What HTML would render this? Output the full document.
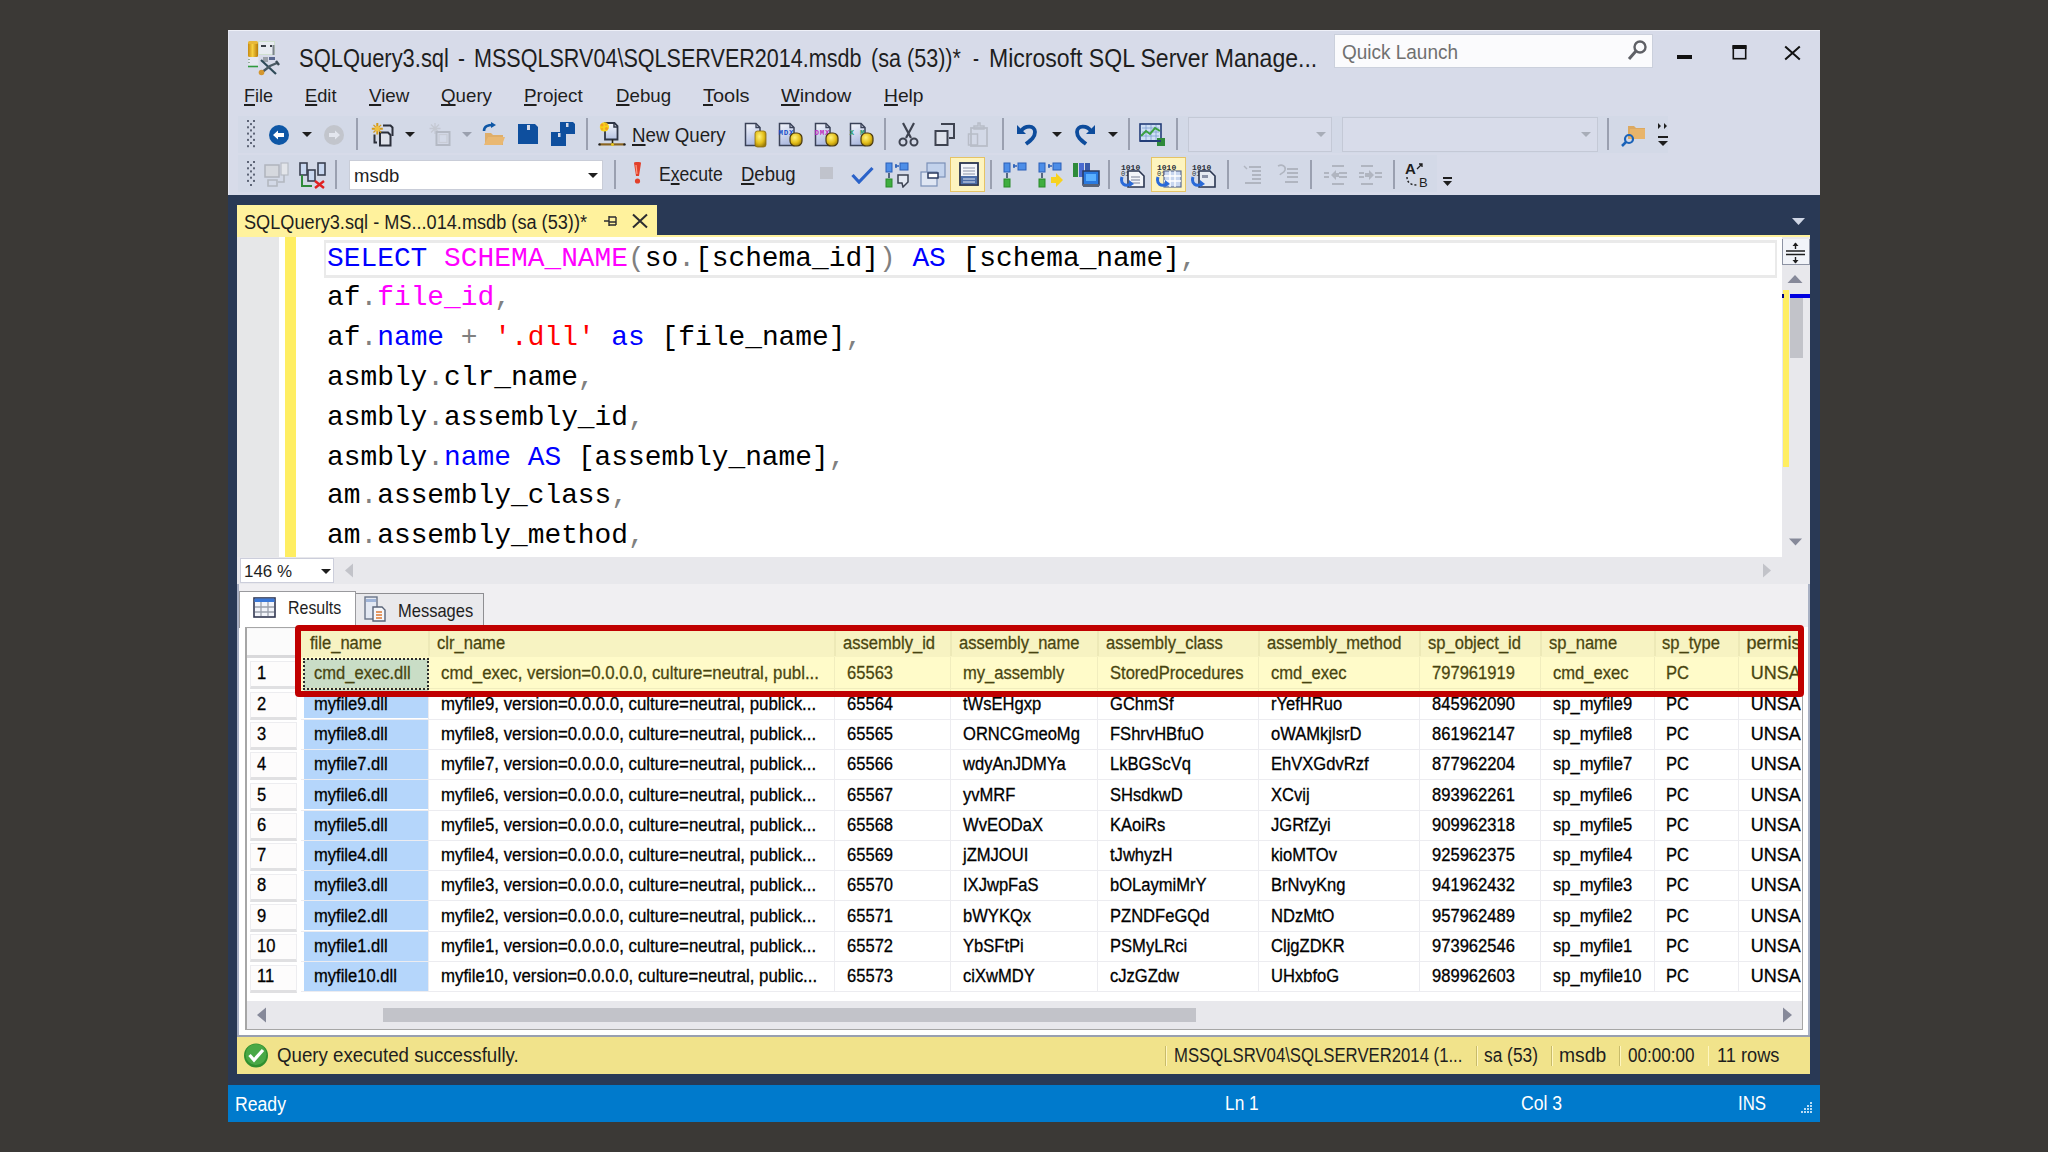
<!DOCTYPE html>
<html><head><meta charset="utf-8">
<style>
*{margin:0;padding:0;box-sizing:border-box}
html,body{width:2048px;height:1152px;overflow:hidden;background:#3b3936;font-family:"Liberation Sans",sans-serif}
.a{position:absolute;display:block}
.t{position:absolute;white-space:nowrap;line-height:1;transform-origin:0 0}
u{text-decoration:underline;text-decoration-thickness:2px;text-underline-offset:2px;text-decoration-skip-ink:none}
</style></head><body>

<div class="a" style="left:228px;top:30px;width:1592px;height:165px;background:#d7dbe9;border-top:1px solid #eef0f8;border-left:1px solid #e4e6f0"></div>
<div class="a" style="left:238px;top:116px;width:1430px;height:37px;background:#d3d9e7;"></div>
<div class="a" style="left:238px;top:155px;width:1199px;height:37px;background:#d3d9e7;"></div>
<svg class="a" style="left:246px;top:38px;" width="36" height="38" viewBox="0 0 36 38">
<defs><linearGradient id="cyl" x1="0" x2="1"><stop offset="0" stop-color="#c88a10"/><stop offset=".45" stop-color="#f6d040"/><stop offset="1" stop-color="#b87a08"/></linearGradient></defs>
<rect x="2" y="4" width="10" height="15" rx="1.5" fill="url(#cyl)"/>
<rect x="2" y="3" width="10" height="3" rx="1.5" fill="#e8b838"/>
<rect x="12.5" y="3.5" width="16" height="13" fill="#e8ecf2" stroke="#cfe0cf" stroke-width="1"/>
<rect x="15" y="7" width="5" height="2" fill="#3a4048"/>
<rect x="24" y="7" width="2" height="2" fill="#3a4048"/>
<rect x="26.5" y="7" width="2" height="10" fill="#7d848c"/>
<rect x="2.5" y="19" width="10" height="9" fill="#e6e8f2"/>
<path d="M3 21 V27" stroke="#4a7a4a" stroke-width="1" stroke-dasharray="1 2"/>
<line x1="2" y1="28.5" x2="12" y2="28.5" stroke="#2f9a3f" stroke-width="1.6"/>
<rect x="17" y="19" width="5" height="5" fill="#9aa0a8"/>
<rect x="23" y="19" width="6" height="3" fill="#5a6890"/>
<path d="M15 22 L30 36" stroke="#2e4a58" stroke-width="2.2"/>
<path d="M31 25 L24 28 L15 35" stroke="#4a5a64" stroke-width="2.4" fill="none"/>
<path d="M30 23 L33 27" stroke="#3a4a54" stroke-width="2.4"/>
<circle cx="15.5" cy="34.5" r="2.8" fill="#d4962e"/>
</svg>
<div class="t" style="left:299.00px;top:44.56px;font-size:26.5px;color:#1e1e1e;font-family:'Liberation Sans',sans-serif;transform:scaleX(0.8276);">SQLQuery3.sql</div>
<div class="t" style="left:458.00px;top:44.56px;font-size:26.5px;color:#1e1e1e;font-family:'Liberation Sans',sans-serif;transform:scaleX(0.7885);">-</div>
<div class="t" style="left:474.20px;top:44.56px;font-size:26.5px;color:#1e1e1e;font-family:'Liberation Sans',sans-serif;transform:scaleX(0.8137);">MSSQLSRV04\SQLSERVER2014.msdb</div>
<div class="t" style="left:870.60px;top:44.56px;font-size:26.5px;color:#1e1e1e;font-family:'Liberation Sans',sans-serif;transform:scaleX(0.8144);">(sa (53))*</div>
<div class="t" style="left:973.00px;top:44.56px;font-size:26.5px;color:#1e1e1e;font-family:'Liberation Sans',sans-serif;transform:scaleX(0.6759);">-</div>
<div class="t" style="left:989.20px;top:44.56px;font-size:26.5px;color:#1e1e1e;font-family:'Liberation Sans',sans-serif;transform:scaleX(0.8694);">Microsoft SQL Server Manage...</div>
<div class="a" style="left:1334px;top:34px;width:319px;height:34px;background:#fbfbfd;border:1px solid #cbd0dc"></div>
<div class="t" style="left:1342.00px;top:42.24px;font-size:20.5px;color:#707070;font-family:'Liberation Sans',sans-serif;transform:scaleX(0.9254);">Quick Launch</div>
<svg class="a" style="left:1624px;top:38px;" width="26" height="26" viewBox="0 0 26 26">
<circle cx="16" cy="9" r="5.5" fill="none" stroke="#5f6066" stroke-width="2.4"/>
<line x1="12" y1="13" x2="5" y2="21" stroke="#5f6066" stroke-width="3"/>
</svg>
<div class="a" style="left:1677px;top:54.5px;width:15px;height:4.5px;background:#111111;"></div>
<svg class="a" style="left:1731px;top:44px;" width="17" height="17" viewBox="0 0 17 17"><rect x="2.3" y="2.3" width="12.4" height="12.4" fill="none" stroke="#111" stroke-width="1.6"/><rect x="1.5" y="1" width="14" height="4" fill="#111"/></svg>
<svg class="a" style="left:1783px;top:44px;" width="20" height="18" viewBox="0 0 20 18"><path d="M2.2 2.5 L16.8 15.5 M16.8 2.5 L2.2 15.5" stroke="#111" stroke-width="2"/></svg>
<div class="t" style="left:244.00px;top:85.91px;font-size:19px;color:#1e1e1e;font-family:'Liberation Sans',sans-serif;transform:scaleX(0.9480);"><u>F</u>ile</div>
<div class="t" style="left:305.00px;top:85.91px;font-size:19px;color:#1e1e1e;font-family:'Liberation Sans',sans-serif;transform:scaleX(0.9611);"><u>E</u>dit</div>
<div class="t" style="left:368.70px;top:85.91px;font-size:19px;color:#1e1e1e;font-family:'Liberation Sans',sans-serif;transform:scaleX(0.9865);"><u>V</u>iew</div>
<div class="t" style="left:440.80px;top:85.91px;font-size:19px;color:#1e1e1e;font-family:'Liberation Sans',sans-serif;transform:scaleX(0.9850);"><u>Q</u>uery</div>
<div class="t" style="left:524.30px;top:85.91px;font-size:19px;color:#1e1e1e;font-family:'Liberation Sans',sans-serif;transform:scaleX(0.9934);"><u>P</u>roject</div>
<div class="t" style="left:615.70px;top:85.91px;font-size:19px;color:#1e1e1e;font-family:'Liberation Sans',sans-serif;transform:scaleX(0.9829);"><u>D</u>ebug</div>
<div class="t" style="left:703.20px;top:85.91px;font-size:19px;color:#1e1e1e;font-family:'Liberation Sans',sans-serif;transform:scaleX(1.0504);"><u>T</u>ools</div>
<div class="t" style="left:781.40px;top:85.91px;font-size:19px;color:#1e1e1e;font-family:'Liberation Sans',sans-serif;transform:scaleX(1.0408);"><u>W</u>indow</div>
<div class="t" style="left:884.30px;top:85.91px;font-size:19px;color:#1e1e1e;font-family:'Liberation Sans',sans-serif;transform:scaleX(1.0117);"><u>H</u>elp</div>
<svg class="a" style="left:247px;top:120px;" width="9" height="28" viewBox="0 0 9 28"><rect x="0" y="0.0" width="2" height="2" fill="#5d6476"/><rect x="6" y="0.0" width="2" height="2" fill="#5d6476"/><rect x="3" y="3.1" width="2" height="2" fill="#5d6476"/><rect x="0" y="6.3" width="2" height="2" fill="#5d6476"/><rect x="6" y="6.3" width="2" height="2" fill="#5d6476"/><rect x="3" y="9.4" width="2" height="2" fill="#5d6476"/><rect x="0" y="12.6" width="2" height="2" fill="#5d6476"/><rect x="6" y="12.6" width="2" height="2" fill="#5d6476"/><rect x="3" y="15.7" width="2" height="2" fill="#5d6476"/><rect x="0" y="18.9" width="2" height="2" fill="#5d6476"/><rect x="6" y="18.9" width="2" height="2" fill="#5d6476"/><rect x="3" y="22.0" width="2" height="2" fill="#5d6476"/><rect x="0" y="25.2" width="2" height="2" fill="#5d6476"/><rect x="6" y="25.2" width="2" height="2" fill="#5d6476"/></svg>
<svg class="a" style="left:247px;top:161px;" width="9" height="28" viewBox="0 0 9 28"><rect x="0" y="0.0" width="2" height="2" fill="#5d6476"/><rect x="6" y="0.0" width="2" height="2" fill="#5d6476"/><rect x="3" y="3.1" width="2" height="2" fill="#5d6476"/><rect x="0" y="6.3" width="2" height="2" fill="#5d6476"/><rect x="6" y="6.3" width="2" height="2" fill="#5d6476"/><rect x="3" y="9.4" width="2" height="2" fill="#5d6476"/><rect x="0" y="12.6" width="2" height="2" fill="#5d6476"/><rect x="6" y="12.6" width="2" height="2" fill="#5d6476"/><rect x="3" y="15.7" width="2" height="2" fill="#5d6476"/><rect x="0" y="18.9" width="2" height="2" fill="#5d6476"/><rect x="6" y="18.9" width="2" height="2" fill="#5d6476"/></svg>
<svg class="a" style="left:250px;top:184px;" width="4" height="3" viewBox="0 0 4 3"><rect x="0" y="0" width="2" height="2" fill="#5d6476"/></svg>
<svg class="a" style="left:268px;top:124px;" width="22" height="22" viewBox="0 0 22 22"><circle cx="11" cy="11" r="10" fill="#0e57a6"/><path d="M5 11 L10 6.5 V9 H16 V13 H10 V15.5 Z" fill="#ffffff"/></svg>
<svg class="a" style="left:301.5px;top:132px;" width="10" height="6" viewBox="0 0 10 6"><path d="M0 0 H10 L5 5 Z" fill="#1e1e1e"/></svg>
<svg class="a" style="left:323px;top:124px;" width="22" height="22" viewBox="0 0 22 22"><circle cx="11" cy="11" r="10" fill="#c2c5cc"/><path d="M17 11 L12 6.5 V9 H6 V13 H12 V15.5 Z" fill="#e3e6ee"/></svg>
<div class="a" style="left:356px;top:118px;width:2px;height:32px;background:#9aa0b0;"></div>
<svg class="a" style="left:371px;top:122px;" width="24" height="26" viewBox="0 0 24 26">
<path d="M12 3.5 H19.5 L21.5 5.5 V14" fill="none" stroke="#2b2f3a" stroke-width="2"/>
<path d="M9 10.5 H17 L19.5 13 V23.5 H9 Z" fill="#dfe2ea" stroke="#2b2f3a" stroke-width="2"/>
<path d="M3.5 12.5 V20.5 H6" fill="none" stroke="#2b2f3a" stroke-width="2"/>
<path d="M6.3 1 V12.5 M0.8 6.7 H11.8" stroke="#d49a1a" stroke-width="2"/>
<path d="M2.5 2.9 L10.1 10.5 M10.1 2.9 L2.5 10.5" stroke="#d49a1a" stroke-width="1.3"/>
<circle cx="6.3" cy="6.7" r="2.6" fill="#f0c040"/>
</svg>
<svg class="a" style="left:405px;top:132px;" width="10" height="6" viewBox="0 0 10 6"><path d="M0 0 H10 L5 5 Z" fill="#1e1e1e"/></svg>
<svg class="a" style="left:427px;top:122px;" width="26" height="26" viewBox="0 0 26 26">
<path d="M8 1 V12 M2.5 6.5 H13.5 M4 2.5 L12 10.5 M12 2.5 L4 10.5" stroke="#c4c8d2" stroke-width="1.3"/>
<rect x="9.5" y="10" width="13" height="13" fill="none" stroke="#b4b9c4" stroke-width="2"/>
<rect x="12" y="12.5" width="8" height="8" fill="none" stroke="#c8ccd6" stroke-width="1.2"/>
</svg>
<svg class="a" style="left:461.5px;top:132px;" width="10" height="6" viewBox="0 0 10 6"><path d="M0 0 H10 L5 5 Z" fill="#9aa0ae"/></svg>
<svg class="a" style="left:481px;top:122px;" width="25" height="25" viewBox="0 0 25 25">
<path d="M4 11 H10 L12 13 H22 V23 H4 Z" fill="#dfae69"/>
<path d="M3 23 L7 15 H24 L21 23 Z" fill="#e9b872"/>
<path d="M3 9 C3 4 7 3 12 3" fill="none" stroke="#0e57a6" stroke-width="2.6"/>
<path d="M10 0 L15 3 L10 6 Z" fill="#0e57a6"/>
</svg>
<svg class="a" style="left:518px;top:124px;" width="21" height="20" viewBox="0 0 21 20">
<path d="M0 0 H17 L20 3 V20 H0 Z" fill="#0e4f9e"/>
<rect x="9" y="1" width="3" height="5" fill="#d6dbe9"/>
</svg>
<svg class="a" style="left:551px;top:122px;" width="25" height="24" viewBox="0 0 25 24">
<path d="M9 0 H22 L24 2 V12 H9 Z" fill="#0e4f9e"/>
<rect x="15" y="1" width="2.5" height="4" fill="#d6dbe9"/>
<path d="M0 10 H13 L15 12 V24 H0 Z" fill="#0e4f9e"/>
<rect x="7" y="11" width="2.5" height="4" fill="#d6dbe9"/>
</svg>
<div class="a" style="left:586px;top:118px;width:2px;height:32px;background:#9aa0b0;"></div>
<svg class="a" style="left:597px;top:121px;" width="30" height="27" viewBox="0 0 30 27">
<defs><linearGradient id="nq" x1="0" y1="0" x2="0" y2="1"><stop offset="0" stop-color="#f4f7fc"/><stop offset="1" stop-color="#b6c3e2"/></linearGradient></defs>
<path d="M8 2 H17.5 L20.5 5 V18.5 H8 Z" fill="url(#nq)" stroke="#2f3646" stroke-width="1.8"/>
<path d="M17 2.5 V6 H20.5" fill="none" stroke="#2f3646" stroke-width="1.5"/>
<circle cx="7.4" cy="5.9" r="4.6" fill="#f7d21a"/>
<circle cx="5" cy="4" r="1.6" fill="#f0a020"/><circle cx="9.5" cy="7.5" r="1.6" fill="#f0a020"/><circle cx="9" cy="3.5" r="1.3" fill="#f0b020"/><circle cx="5" cy="8" r="1.3" fill="#f0b020"/>
<line x1="15.5" y1="18.5" x2="15.5" y2="24" stroke="#2a2410" stroke-width="1.6"/>
<line x1="2.5" y1="23.4" x2="27.5" y2="23.4" stroke="#8a6420" stroke-width="2.2"/>
<circle cx="2.5" cy="23.4" r="1.2" fill="#202020"/><circle cx="27.5" cy="23.4" r="1.2" fill="#202020"/>
<circle cx="15.5" cy="23.4" r="1.5" fill="#e8c820"/>
</svg>
<div class="t" style="left:632.00px;top:125.69px;font-size:19.5px;color:#1e1e1e;font-family:'Liberation Sans',sans-serif;transform:scaleX(0.9600);"><u>N</u>ew Query</div>
<svg class="a" style="left:744px;top:122px;" width="26" height="26" viewBox="0 0 26 26"><defs><linearGradient id="dg" x1="0" y1="0" x2="0.3" y2="1"><stop offset="0" stop-color="#f6f8fd"/><stop offset="1" stop-color="#aebbe0"/></linearGradient>
<radialGradient id="gb" cx=".4" cy=".35" r=".7"><stop offset="0" stop-color="#fff27a"/><stop offset=".6" stop-color="#e3be1a"/><stop offset="1" stop-color="#9a7a08"/></radialGradient></defs>
<path d="M1.5 1.5 H12 L16 5.5 V23.5 H1.5 Z" fill="url(#dg)" stroke="#3a4258" stroke-width="1.5"/>
<path d="M12 1.5 V5.5 H16" fill="none" stroke="#3a4258" stroke-width="1.3"/><rect x="11" y="9" width="11" height="16" rx="2.5" fill="url(#gb)" stroke="#8a6a10" stroke-width="0.8"/></svg>
<svg class="a" style="left:778px;top:122px;" width="26" height="26" viewBox="0 0 26 26"><defs><linearGradient id="dg" x1="0" y1="0" x2="0.3" y2="1"><stop offset="0" stop-color="#f6f8fd"/><stop offset="1" stop-color="#aebbe0"/></linearGradient>
<radialGradient id="gb" cx=".4" cy=".35" r=".7"><stop offset="0" stop-color="#fff27a"/><stop offset=".6" stop-color="#e3be1a"/><stop offset="1" stop-color="#9a7a08"/></radialGradient></defs>
<path d="M1.5 1.5 H12 L16 5.5 V23.5 H1.5 Z" fill="url(#dg)" stroke="#3a4258" stroke-width="1.5"/>
<path d="M12 1.5 V5.5 H16" fill="none" stroke="#3a4258" stroke-width="1.3"/><text x="0.5" y="12.5" font-family="Liberation Mono" font-size="7.5" font-weight="bold" fill="#1a4fc8" textLength="15">MDX</text><rect x="12" y="11" width="12" height="13" rx="5" fill="url(#gb)" stroke="#4a3a10" stroke-width="1.2"/></svg>
<svg class="a" style="left:814px;top:122px;" width="26" height="26" viewBox="0 0 26 26"><defs><linearGradient id="dg" x1="0" y1="0" x2="0.3" y2="1"><stop offset="0" stop-color="#f6f8fd"/><stop offset="1" stop-color="#aebbe0"/></linearGradient>
<radialGradient id="gb" cx=".4" cy=".35" r=".7"><stop offset="0" stop-color="#fff27a"/><stop offset=".6" stop-color="#e3be1a"/><stop offset="1" stop-color="#9a7a08"/></radialGradient></defs>
<path d="M1.5 1.5 H12 L16 5.5 V23.5 H1.5 Z" fill="url(#dg)" stroke="#3a4258" stroke-width="1.5"/>
<path d="M12 1.5 V5.5 H16" fill="none" stroke="#3a4258" stroke-width="1.3"/><text x="0.5" y="12.5" font-family="Liberation Mono" font-size="7.5" font-weight="bold" fill="#c030c0" textLength="15">DMX</text><rect x="12" y="11" width="12" height="13" rx="5" fill="url(#gb)" stroke="#4a3a10" stroke-width="1.2"/></svg>
<svg class="a" style="left:849px;top:122px;" width="26" height="26" viewBox="0 0 26 26"><defs><linearGradient id="dg" x1="0" y1="0" x2="0.3" y2="1"><stop offset="0" stop-color="#f6f8fd"/><stop offset="1" stop-color="#aebbe0"/></linearGradient>
<radialGradient id="gb" cx=".4" cy=".35" r=".7"><stop offset="0" stop-color="#fff27a"/><stop offset=".6" stop-color="#e3be1a"/><stop offset="1" stop-color="#9a7a08"/></radialGradient></defs>
<path d="M1.5 1.5 H12 L16 5.5 V23.5 H1.5 Z" fill="url(#dg)" stroke="#3a4258" stroke-width="1.5"/>
<path d="M12 1.5 V5.5 H16" fill="none" stroke="#3a4258" stroke-width="1.3"/><text x="0.5" y="12.5" font-family="Liberation Mono" font-size="7.5" font-weight="bold" fill="#2a9a6a" textLength="15">XM</text><rect x="12" y="11" width="12" height="13" rx="5" fill="url(#gb)" stroke="#4a3a10" stroke-width="1.2"/></svg>
<div class="a" style="left:884px;top:118px;width:2px;height:32px;background:#9aa0b0;"></div>
<svg class="a" style="left:898px;top:122px;" width="22" height="25" viewBox="0 0 22 25">
<path d="M5 1 L13 16 M16 1 L8 16" stroke="#3e4350" stroke-width="2.2"/>
<circle cx="5" cy="20" r="3.5" fill="none" stroke="#3e4350" stroke-width="2"/>
<circle cx="16" cy="20" r="3.5" fill="none" stroke="#3e4350" stroke-width="2"/>
</svg>
<svg class="a" style="left:934px;top:123px;" width="22" height="24" viewBox="0 0 22 24">
<path d="M7 1 H20 V15 H15" fill="none" stroke="#3e4350" stroke-width="2"/>
<rect x="1.5" y="8" width="12" height="14" fill="#dfe3ec" stroke="#3e4350" stroke-width="2"/>
</svg>
<svg class="a" style="left:967px;top:122px;" width="22" height="25" viewBox="0 0 22 25">
<path d="M7 4 H11 V1 H13 V4 H17 V7 H7 Z" fill="none" stroke="#b8bdc8" stroke-width="1.5"/>
<rect x="4" y="6" width="16" height="18" fill="none" stroke="#b8bdc8" stroke-width="1.8"/>
<rect x="1.5" y="12" width="9" height="11" fill="none" stroke="#b8bdc8" stroke-width="1.5"/>
</svg>
<div class="a" style="left:1002px;top:118px;width:2px;height:32px;background:#9aa0b0;"></div>
<svg class="a" style="left:1016px;top:122px;" width="24" height="24" viewBox="0 0 24 24">
<path d="M5 9 C9 3 19 3 19 10 C19 15 15 18 10 22" fill="none" stroke="#0d4c9c" stroke-width="3.8"/>
<path d="M1 3 L1 12 L10 12 Z" fill="#0d4c9c"/>
</svg>
<svg class="a" style="left:1052px;top:132px;" width="10" height="6" viewBox="0 0 10 6"><path d="M0 0 H10 L5 5 Z" fill="#1e1e1e"/></svg>
<svg class="a" style="left:1073px;top:122px;" width="24" height="24" viewBox="0 0 24 24">
<path d="M18 9 C14 3 4 3 4 10 C4 15 8 18 13 22" fill="none" stroke="#0d4c9c" stroke-width="3.8"/>
<path d="M22 3 L22 12 L13 12 Z" fill="#0d4c9c"/>
</svg>
<svg class="a" style="left:1107.5px;top:132px;" width="10" height="6" viewBox="0 0 10 6"><path d="M0 0 H10 L5 5 Z" fill="#1e1e1e"/></svg>
<div class="a" style="left:1128px;top:118px;width:2px;height:32px;background:#9aa0b0;"></div>
<svg class="a" style="left:1139px;top:122px;" width="28" height="26" viewBox="0 0 28 26">
<rect x="1" y="2" width="21" height="17" fill="#cfe0f5" stroke="#233e78" stroke-width="1.6"/>
<path d="M3 6 H20 M3 10 H20 M3 14 H20 M7 3 V18 M12 3 V18 M17 3 V18" stroke="#7f9fd0" stroke-width="0.8"/>
<path d="M2 14 L7 9 L11 12 L16 6 L21 9" fill="none" stroke="#3aa040" stroke-width="2"/>
<rect x="18" y="16" width="8" height="8" fill="#2e8a3a"/>
<line x1="1" y1="19" x2="22" y2="19" stroke="#233e78" stroke-width="2"/>
</svg>
<div class="a" style="left:1176px;top:118px;width:2px;height:32px;background:#9aa0b0;"></div>
<div class="a" style="left:1188px;top:117px;width:144px;height:35px;background:#d8dcea;border:1px solid #c4c9d6"></div>
<svg class="a" style="left:1316px;top:132px;" width="10" height="6" viewBox="0 0 10 6"><path d="M0 0 H10 L5 5 Z" fill="#a8adb8"/></svg>
<div class="a" style="left:1342px;top:117px;width:256px;height:35px;background:#d8dcea;border:1px solid #c4c9d6"></div>
<svg class="a" style="left:1581px;top:132px;" width="10" height="6" viewBox="0 0 10 6"><path d="M0 0 H10 L5 5 Z" fill="#a8adb8"/></svg>
<div class="a" style="left:1607px;top:118px;width:2px;height:32px;background:#9aa0b0;"></div>
<svg class="a" style="left:1620px;top:121px;" width="28" height="28" viewBox="0 0 28 28">
<path d="M8 5 H14 L16 7 H25 V18 H8 Z" fill="#dca961"/>
<rect x="10" y="8" width="15" height="10" fill="#e8b46a"/>
<circle cx="9" cy="18" r="4" fill="none" stroke="#1a62b8" stroke-width="2.2"/>
<line x1="6" y1="21" x2="2" y2="25" stroke="#1a62b8" stroke-width="2.5"/>
</svg>
<svg class="a" style="left:1656px;top:121px;" width="14" height="28" viewBox="0 0 14 28">
<path d="M2 2 L5 5 L2 8 Z M8 2 L11 5 L8 8 Z" fill="#1e1e1e"/>
<rect x="2" y="15" width="10" height="2" fill="#1e1e1e"/>
<path d="M2 20 H12 L7 25 Z" fill="#1e1e1e"/>
</svg>
<svg class="a" style="left:264px;top:162px;" width="28" height="27" viewBox="0 0 28 27">
<rect x="1" y="3" width="14" height="12" fill="#d5d8de" stroke="#b0b4bd" stroke-width="1.5"/>
<rect x="17" y="1" width="7" height="12" fill="#e3e5ea" stroke="#b8bcc5" stroke-width="1.2"/>
<path d="M4 18 H13 V24 H4 Z M20 13 V20 H14" fill="none" stroke="#b3b7c0" stroke-width="1.6"/>
</svg>
<svg class="a" style="left:298px;top:162px;" width="30" height="27" viewBox="0 0 30 27">
<rect x="2" y="1" width="7" height="12" fill="#c9d8f0" stroke="#3a4050" stroke-width="1.6"/>
<rect x="10" y="8" width="7" height="11" fill="#c9d8f0" stroke="#3a4050" stroke-width="1.6"/>
<rect x="20" y="1" width="7" height="12" fill="#c9d8f0" stroke="#3a4050" stroke-width="1.6"/>
<path d="M4 13 V24 H14" fill="none" stroke="#2f8a3a" stroke-width="2"/>
<path d="M17 19 L26 26 M26 19 L17 26" stroke="#e02020" stroke-width="2.4"/>
</svg>
<div class="a" style="left:335px;top:160px;width:2px;height:29px;background:#9aa0b0;"></div>
<div class="a" style="left:349px;top:160px;width:254px;height:30px;background:#ffffff;border:1px solid #c9cdd8"></div>
<div class="t" style="left:354.00px;top:167.26px;font-size:18px;color:#1e1e1e;font-family:'Liberation Sans',sans-serif;transform:scaleX(1.0270);">msdb</div>
<svg class="a" style="left:587.8px;top:172.5px;" width="10" height="6" viewBox="0 0 10 6"><path d="M0 0 H10 L5 5 Z" fill="#1e1e1e"/></svg>
<div class="a" style="left:614px;top:160px;width:2px;height:29px;background:#9aa0b0;"></div>
<svg class="a" style="left:631px;top:162px;" width="14" height="23" viewBox="0 0 14 23">
<path d="M3 1 C3 -0.5 10 -0.5 10 1 L8 14 H5 Z" fill="#e2402a"/>
<path d="M5 3 L6 12" stroke="#ff9a80" stroke-width="1.2"/>
<circle cx="6.5" cy="19" r="2.6" fill="#e2402a"/>
</svg>
<div class="t" style="left:659.00px;top:164.69px;font-size:19.5px;color:#1e1e1e;font-family:'Liberation Sans',sans-serif;transform:scaleX(0.9036);">E<u>x</u>ecute</div>
<div class="t" style="left:740.50px;top:164.69px;font-size:19.5px;color:#1e1e1e;font-family:'Liberation Sans',sans-serif;transform:scaleX(0.9490);"><u>D</u>ebug</div>
<div class="a" style="left:820px;top:167px;width:13px;height:12px;background:#c0c3cc;"></div>
<svg class="a" style="left:851px;top:166px;" width="23" height="18" viewBox="0 0 23 18"><path d="M1.5 9 L8 16 L21.5 2" fill="none" stroke="#2a62c9" stroke-width="3.2"/></svg>
<svg class="a" style="left:885px;top:162px;" width="26" height="26" viewBox="0 0 26 26"><rect x="1" y="1" width="6" height="9" fill="#4d8ee8" stroke="#2a5fb8" stroke-width="1"/>
<rect x="15" y="1" width="8" height="7" fill="#4d8ee8" stroke="#2a5fb8" stroke-width="1"/>
<path d="M10 4 H14 M11 2 V6" stroke="#2a5fb8" stroke-width="1.5"/>
<path d="M4 11 V16" stroke="#2a4060" stroke-width="1.5"/>
<rect x="1" y="17" width="6" height="8" fill="#3fae3f" stroke="#2a8a2a" stroke-width="1"/><path d="M13 13 H23 V20 L18 25 L17 21 H13 Z" fill="#e3e8f2" stroke="#3a4050" stroke-width="1.5"/></svg>
<svg class="a" style="left:920px;top:162px;" width="27" height="25" viewBox="0 0 27 25">
<rect x="7" y="1" width="18" height="14" fill="#c2d2ec" stroke="#7a90b8" stroke-width="1.2"/>
<rect x="1" y="10" width="16" height="14" fill="#dfe6f3" stroke="#7a90b8" stroke-width="1.2"/>
<rect x="8" y="11" width="10" height="5" fill="#ffffff" stroke="#2a3a60" stroke-width="1.5"/>
</svg>
<div class="a" style="left:950px;top:157px;width:35px;height:35px;background:#fdf4bf;border:1px solid #e5c365"></div>
<svg class="a" style="left:959px;top:162px;" width="20" height="24" viewBox="0 0 20 24">
<rect x="1" y="1" width="18" height="22" fill="#f4f6fa" stroke="#2a3550" stroke-width="1.8"/>
<path d="M4 6 H16 M4 9 H16 M4 12 H16" stroke="#8a92a8" stroke-width="1.2"/>
<rect x="2" y="14" width="16" height="8" fill="#4d6ea8"/>
<path d="M4 17 H16 M4 20 H16" stroke="#dfe6f3" stroke-width="1.2"/>
</svg>
<div class="a" style="left:990px;top:160px;width:2px;height:29px;background:#9aa0b0;"></div>
<svg class="a" style="left:1003px;top:162px;" width="26" height="26" viewBox="0 0 26 26"><rect x="1" y="1" width="6" height="9" fill="#4d8ee8" stroke="#2a5fb8" stroke-width="1"/>
<rect x="15" y="1" width="8" height="7" fill="#4d8ee8" stroke="#2a5fb8" stroke-width="1"/>
<path d="M10 4 H14 M11 2 V6" stroke="#2a5fb8" stroke-width="1.5"/>
<path d="M4 11 V16" stroke="#2a4060" stroke-width="1.5"/>
<rect x="1" y="17" width="6" height="8" fill="#3fae3f" stroke="#2a8a2a" stroke-width="1"/></svg>
<svg class="a" style="left:1038px;top:162px;" width="26" height="26" viewBox="0 0 26 26"><rect x="1" y="1" width="6" height="9" fill="#4d8ee8" stroke="#2a5fb8" stroke-width="1"/>
<rect x="15" y="1" width="8" height="7" fill="#4d8ee8" stroke="#2a5fb8" stroke-width="1"/>
<path d="M10 4 H14 M11 2 V6" stroke="#2a5fb8" stroke-width="1.5"/>
<path d="M4 11 V16" stroke="#2a4060" stroke-width="1.5"/>
<rect x="1" y="17" width="6" height="8" fill="#3fae3f" stroke="#2a8a2a" stroke-width="1"/><path d="M13 15 H18 V11 L25 18 L18 25 V21 H13 Z" fill="#f7d21e"/></svg>
<svg class="a" style="left:1072px;top:162px;" width="28" height="26" viewBox="0 0 28 26">
<rect x="1" y="1" width="5" height="14" fill="#2e8a3a"/>
<rect x="7" y="1" width="5" height="14" fill="#4a6ad0"/>
<rect x="13" y="1" width="5" height="14" fill="#3a5aa8"/>
<rect x="11" y="9" width="16" height="14" fill="#2a7ae0" stroke="#2a3a60" stroke-width="1.5"/>
<rect x="14" y="12" width="10" height="7" fill="#5ab0ff"/>
<rect x="11" y="22" width="16" height="3" fill="#5a6478"/>
</svg>
<div class="a" style="left:1108px;top:160px;width:2px;height:29px;background:#9aa0b0;"></div>
<svg class="a" style="left:1120px;top:162px;" width="26" height="26" viewBox="0 0 26 26"><text x="1" y="8" font-family="Liberation Mono" font-size="8" font-weight="bold" fill="#2a2f3a">1010</text>
<text x="1" y="14" font-family="Liberation Mono" font-size="7" fill="#2a2f3a">01</text><path d="M8 9 H19 L24 14 V25 H8 Z" fill="#f3f5fa" stroke="#2a3550" stroke-width="1.6"/><path d="M11 15 H20 M11 18 H20 M11 21 H20" stroke="#7a8298" stroke-width="1.2"/><path d="M2 15 C0 22 5 25 11 22" fill="none" stroke="#2a6ad8" stroke-width="3"/><path d="M9 18 L14 22 L9 25 Z" fill="#2a6ad8"/></svg>
<div class="a" style="left:1151px;top:157px;width:35px;height:35px;background:#fdf4bf;border:1px solid #e5c365"></div>
<svg class="a" style="left:1156px;top:162px;" width="26" height="26" viewBox="0 0 26 26"><text x="1" y="8" font-family="Liberation Mono" font-size="8" font-weight="bold" fill="#2a2f3a">1010</text>
<text x="1" y="14" font-family="Liberation Mono" font-size="7" fill="#2a2f3a">01</text><rect x="8" y="9" width="17" height="16" fill="#c8d6ef" stroke="#5a6a90" stroke-width="1.2"/><path d="M8 14 H25 M8 19 H25 M14 9 V25 M19 9 V25" stroke="#ffffff" stroke-width="1.4"/><path d="M2 15 C0 22 5 25 11 22" fill="none" stroke="#2a6ad8" stroke-width="3"/><path d="M9 18 L14 22 L9 25 Z" fill="#2a6ad8"/></svg>
<svg class="a" style="left:1191px;top:162px;" width="26" height="26" viewBox="0 0 26 26"><text x="1" y="8" font-family="Liberation Mono" font-size="8" font-weight="bold" fill="#2a2f3a">1010</text>
<text x="1" y="14" font-family="Liberation Mono" font-size="7" fill="#2a2f3a">01</text><path d="M8 9 H19 L24 14 V25 H8 Z" fill="#e6eaf2" stroke="#2a3550" stroke-width="1.6"/><rect x="11" y="13" width="6" height="3" fill="#8a92a8"/><path d="M2 15 C0 22 5 25 11 22" fill="none" stroke="#2a6ad8" stroke-width="3"/><path d="M9 18 L14 22 L9 25 Z" fill="#2a6ad8"/></svg>
<div class="a" style="left:1227px;top:160px;width:2px;height:29px;background:#9aa0b0;"></div>
<svg class="a" style="left:1243px;top:165px;" width="20" height="19" viewBox="0 0 20 19">
<path d="M6 2 H18 M9 6 H18 M9 10 H18 M9 14 H18 M2 18 H18" stroke="#b0b5c0" stroke-width="2"/>
<path d="M1 1 L4 4" stroke="#b0b5c0" stroke-width="1.4"/>
</svg>
<svg class="a" style="left:1276px;top:163px;" width="23" height="21" viewBox="0 0 23 21">
<path d="M11 6 H22 M11 10 H22 M11 14 H22 M9 19 H22" stroke="#b0b5c0" stroke-width="2"/>
<path d="M2 3 C6 1 10 3 9 7 C8 10 5 10 4 12" fill="none" stroke="#b0b5c0" stroke-width="1.6"/>
</svg>
<div class="a" style="left:1310px;top:160px;width:2px;height:29px;background:#9aa0b0;"></div>
<svg class="a" style="left:1323px;top:164px;" width="25" height="21" viewBox="0 0 25 21">
<path d="M9 2 H21 M1 9 H6 M16 9 H24 M1 13 H6 M16 13 H24 M9 20 H21" stroke="#b0b5c0" stroke-width="2"/>
<path d="M8 11 L13 6 V9 H16 V13 H13 V16 Z" fill="#b0b5c0"/>
</svg>
<svg class="a" style="left:1358px;top:164px;" width="25" height="21" viewBox="0 0 25 21">
<path d="M3 2 H15 M1 9 H6 M17 9 H24 M1 13 H6 M17 13 H24 M3 20 H15" stroke="#b0b5c0" stroke-width="2"/>
<path d="M16 11 L11 6 V9 H7 V13 H11 V16 Z" fill="#b0b5c0"/>
</svg>
<div class="a" style="left:1393px;top:160px;width:2px;height:29px;background:#9aa0b0;"></div>
<svg class="a" style="left:1405px;top:161px;" width="28" height="28" viewBox="0 0 28 28">
<text x="0" y="13" font-family="Liberation Sans" font-size="15" font-weight="bold" fill="#1e1e1e">A</text>
<text x="14" y="26" font-family="Liberation Sans" font-size="13" fill="#1e1e1e">B</text>
<path d="M2 16 C2 22 6 24 12 24" fill="none" stroke="#1e1e1e" stroke-width="1.4" stroke-dasharray="2 2"/>
<path d="M12 8 L17 3 M14 3 H17 V6" fill="none" stroke="#1e1e1e" stroke-width="1.3"/>
</svg>
<svg class="a" style="left:1442px;top:176px;" width="12" height="12" viewBox="0 0 12 12"><rect x="1" y="1" width="9" height="2" fill="#1e1e1e"/><path d="M1 5 H10 L5.5 10 Z" fill="#1e1e1e"/></svg>
<div class="a" style="left:228px;top:195px;width:1592px;height:890px;background:#293955;"></div>
<div class="a" style="left:237px;top:205px;width:420px;height:32px;background:#fff29d;"></div>
<div class="t" style="left:244.40px;top:212.07px;font-size:20px;color:#1e1e1e;font-family:'Liberation Sans',sans-serif;transform:scaleX(0.9076);">SQLQuery3.sql - MS...014.msdb (sa (53))*</div>
<svg class="a" style="left:603px;top:214px;" width="16" height="14" viewBox="0 0 16 14">
<path d="M1 7 H6 M6 2 V12 M6 3 H13 M6 11 H13 M13 3 V11 M6 8 H13" fill="none" stroke="#2d2d30" stroke-width="1.4"/>
</svg>
<svg class="a" style="left:631px;top:213px;" width="19" height="16" viewBox="0 0 19 16"><path d="M2 1.5 L16 14.5 M16 1.5 L2 14.5" stroke="#2d2d30" stroke-width="2"/></svg>
<svg class="a" style="left:1792px;top:217px;" width="14" height="9" viewBox="0 0 14 9"><path d="M0 1 H13 L6.5 8 Z" fill="#cfd6e5"/></svg>
<div class="a" style="left:237px;top:235px;width:1573px;height:2px;background:#fff29d;"></div>
<div class="a" style="left:237px;top:237px;width:1573px;height:320px;background:#ffffff;"></div>
<div class="a" style="left:237px;top:237px;width:42px;height:320px;background:#e6e7e8;"></div>
<div class="a" style="left:285px;top:237px;width:11px;height:320px;background:#ffee62;"></div>
<div class="a" style="left:324px;top:240px;width:1453px;height:38px;background:transparent;border:3px solid #eaeaea;border-right-width:2px;border-left-width:2px"></div>
<div class="a" style="left:1782px;top:237px;width:28px;height:320px;background:#e8e8ec;"></div>
<div class="a" style="left:1782px;top:239px;width:28px;height:26px;background:#f2f4f9;border:1px solid #8d93a3;border-top:none;border-left-width:1px"></div>
<svg class="a" style="left:1784px;top:241px;" width="24" height="23" viewBox="0 0 24 23">
<path d="M2 10 H21 M2 13.5 H21" stroke="#1e1e1e" stroke-width="1.6"/>
<path d="M11.5 2 V8 M11.5 16 V22" stroke="#1e1e1e" stroke-width="1.4"/>
<path d="M8.5 5 L11.5 1.5 L14.5 5 Z M8.5 19 L11.5 22.5 L14.5 19 Z" fill="#1e1e1e"/>
</svg>
<svg class="a" style="left:1787px;top:274px;" width="16" height="10" viewBox="0 0 16 10"><path d="M0.5 9 H15.5 L8 1 Z" fill="#868999"/></svg>
<div class="a" style="left:1783px;top:290px;width:6px;height:177px;background:#ffee62;"></div>
<div class="a" style="left:1790px;top:296px;width:13px;height:62px;background:#c2c3c9;"></div>
<div class="a" style="left:1790px;top:294px;width:20px;height:3.5px;background:#0000e0;"></div>
<div class="a" style="left:1782px;top:294px;width:2px;height:3.5px;background:#000080;"></div>
<svg class="a" style="left:1789px;top:538px;" width="14" height="8" viewBox="0 0 14 8"><path d="M0 0.5 H13 L6.5 7.5 Z" fill="#868999"/></svg>
<div class="t" style="left:326.5px;top:244.77px;font-size:28.5px;font-family:'Liberation Mono',monospace;transform:scaleX(0.9778)"><span style="color:#0000ff">SELECT</span><span style="color:#000000"> </span><span style="color:#ff00ff">SCHEMA_NAME</span><span style="color:#808080">(</span><span style="color:#000000">so</span><span style="color:#808080">.</span><span style="color:#000000">[schema_id]</span><span style="color:#808080">)</span><span style="color:#000000"> </span><span style="color:#0000ff">AS</span><span style="color:#000000"> </span><span style="color:#000000">[schema_name]</span><span style="color:#808080">,</span></div>
<div class="t" style="left:326.5px;top:283.77px;font-size:28.5px;font-family:'Liberation Mono',monospace;transform:scaleX(0.9778)"><span style="color:#000000">af</span><span style="color:#808080">.</span><span style="color:#ff00ff">file_id</span><span style="color:#808080">,</span></div>
<div class="t" style="left:326.5px;top:323.77px;font-size:28.5px;font-family:'Liberation Mono',monospace;transform:scaleX(0.9778)"><span style="color:#000000">af</span><span style="color:#808080">.</span><span style="color:#0000ff">name</span><span style="color:#000000"> </span><span style="color:#808080">+</span><span style="color:#000000"> </span><span style="color:#ff0000">&#x27;.dll&#x27;</span><span style="color:#000000"> </span><span style="color:#0000ff">as</span><span style="color:#000000"> </span><span style="color:#000000">[file_name]</span><span style="color:#808080">,</span></div>
<div class="t" style="left:326.5px;top:363.77px;font-size:28.5px;font-family:'Liberation Mono',monospace;transform:scaleX(0.9778)"><span style="color:#000000">asmbly</span><span style="color:#808080">.</span><span style="color:#000000">clr_name</span><span style="color:#808080">,</span></div>
<div class="t" style="left:326.5px;top:403.77px;font-size:28.5px;font-family:'Liberation Mono',monospace;transform:scaleX(0.9778)"><span style="color:#000000">asmbly</span><span style="color:#808080">.</span><span style="color:#000000">assembly_id</span><span style="color:#808080">,</span></div>
<div class="t" style="left:326.5px;top:443.77px;font-size:28.5px;font-family:'Liberation Mono',monospace;transform:scaleX(0.9778)"><span style="color:#000000">asmbly</span><span style="color:#808080">.</span><span style="color:#0000ff">name</span><span style="color:#000000"> </span><span style="color:#0000ff">AS</span><span style="color:#000000"> </span><span style="color:#000000">[assembly_name]</span><span style="color:#808080">,</span></div>
<div class="t" style="left:326.5px;top:481.97px;font-size:28.5px;font-family:'Liberation Mono',monospace;transform:scaleX(0.9778)"><span style="color:#000000">am</span><span style="color:#808080">.</span><span style="color:#000000">assembly_class</span><span style="color:#808080">,</span></div>
<div class="t" style="left:326.5px;top:521.97px;font-size:28.5px;font-family:'Liberation Mono',monospace;transform:scaleX(0.9778)"><span style="color:#000000">am</span><span style="color:#808080">.</span><span style="color:#000000">assembly_method</span><span style="color:#808080">,</span></div>
<div class="a" style="left:237px;top:557px;width:1573px;height:27px;background:#e8e8ec;"></div>
<div class="a" style="left:240px;top:558px;width:94px;height:25px;background:#ffffff;border:1px solid #cccedb"></div>
<div class="t" style="left:244.00px;top:562.81px;font-size:17px;color:#1e1e1e;font-family:'Liberation Sans',sans-serif;transform:scaleX(0.9960);">146 %</div>
<svg class="a" style="left:321px;top:569px;" width="10" height="6" viewBox="0 0 10 6"><path d="M0 0 H10 L5 5 Z" fill="#1e1e1e"/></svg>
<svg class="a" style="left:344px;top:563px;" width="10" height="15" viewBox="0 0 10 15"><path d="M9 0.5 V14.5 L1 7.5 Z" fill="#c2c3c9"/></svg>
<svg class="a" style="left:1762px;top:563px;" width="10" height="15" viewBox="0 0 10 15"><path d="M1 0.5 V14.5 L9 7.5 Z" fill="#c2c3c9"/></svg>
<div class="a" style="left:237px;top:584px;width:1573px;height:453px;background:#ffffff;"></div>
<div class="a" style="left:237px;top:584px;width:1573px;height:43px;background:#f0eff2;"></div>
<div class="a" style="left:237px;top:584px;width:2px;height:453px;background:#a9b1c4;"></div>
<div class="a" style="left:1808px;top:584px;width:2px;height:453px;background:#a9b1c4;"></div>
<div class="a" style="left:239px;top:591px;width:117px;height:37px;background:#ffffff;border:1px solid #9a9a9e;border-bottom:none"></div>
<div class="a" style="left:356px;top:593px;width:128px;height:35px;background:#e9e9ec;border:1.5px solid #8e8e92;border-bottom:none;border-left:none"></div>
<svg class="a" style="left:253px;top:597px;" width="23" height="21" viewBox="0 0 23 21">
<rect x="1" y="1" width="21" height="19" fill="#f2f4fa" stroke="#303650" stroke-width="1.6"/>
<rect x="1.5" y="1.5" width="20" height="3.5" fill="#3a78d8"/>
<path d="M8 5 V19 M15 5 V19 M2 10 H21 M2 15 H21" stroke="#9aa0ac" stroke-width="1.3"/>
</svg>
<div class="t" style="left:288.40px;top:597.71px;font-size:19px;color:#1e1e1e;font-family:'Liberation Sans',sans-serif;transform:scaleX(0.8396);">Results</div>
<svg class="a" style="left:363px;top:596px;" width="25" height="26" viewBox="0 0 25 26">
<rect x="2" y="1" width="12" height="22" fill="#e3e8f2" stroke="#6a7488" stroke-width="1.4"/>
<rect x="3" y="3" width="10" height="3" fill="#9fb4d8"/>
<path d="M10 11 H19 L22 14 V25 H10 Z" fill="#f6f7fa" stroke="#5a6478" stroke-width="1.4"/>
<path d="M13 16 H19 M13 19 H19 M13 22 H19" stroke="#e07a30" stroke-width="1.4"/>
</svg>
<div class="t" style="left:398.20px;top:601.11px;font-size:19px;color:#1e1e1e;font-family:'Liberation Sans',sans-serif;transform:scaleX(0.8680);">Messages</div>
<div class="a" style="left:245px;top:627px;width:1558px;height:403px;background:#ffffff;border:2px solid #a6a6a6;border-right-width:1px"></div>
<div class="a" style="left:247px;top:628px;width:1554px;height:29px;background:#f4f4f6;"></div>
<div class="a" style="left:247px;top:629px;width:50px;height:29px;background:#fbfbfb;border-bottom:3px solid #d9d9db"></div>
<div class="a" style="left:249.5px;top:661px;width:47.5px;height:28px;background:#fdfcfc;border:1px solid #ededf0;border-bottom:3px solid #e0e0e2"></div>
<div class="a" style="left:249.5px;top:692px;width:47.5px;height:28px;background:#fdfcfc;border:1px solid #ededf0;border-bottom:3px solid #e0e0e2"></div>
<div class="a" style="left:249.5px;top:722px;width:47.5px;height:28px;background:#fdfcfc;border:1px solid #ededf0;border-bottom:3px solid #e0e0e2"></div>
<div class="a" style="left:249.5px;top:752px;width:47.5px;height:28px;background:#fdfcfc;border:1px solid #ededf0;border-bottom:3px solid #e0e0e2"></div>
<div class="a" style="left:249.5px;top:783px;width:47.5px;height:28px;background:#fdfcfc;border:1px solid #ededf0;border-bottom:3px solid #e0e0e2"></div>
<div class="a" style="left:249.5px;top:813px;width:47.5px;height:28px;background:#fdfcfc;border:1px solid #ededf0;border-bottom:3px solid #e0e0e2"></div>
<div class="a" style="left:249.5px;top:843px;width:47.5px;height:28px;background:#fdfcfc;border:1px solid #ededf0;border-bottom:3px solid #e0e0e2"></div>
<div class="a" style="left:249.5px;top:874px;width:47.5px;height:28px;background:#fdfcfc;border:1px solid #ededf0;border-bottom:3px solid #e0e0e2"></div>
<div class="a" style="left:249.5px;top:904px;width:47.5px;height:28px;background:#fdfcfc;border:1px solid #ededf0;border-bottom:3px solid #e0e0e2"></div>
<div class="a" style="left:249.5px;top:934px;width:47.5px;height:28px;background:#fdfcfc;border:1px solid #ededf0;border-bottom:3px solid #e0e0e2"></div>
<div class="a" style="left:249.5px;top:965px;width:47.5px;height:28px;background:#fdfcfc;border:1px solid #ededf0;border-bottom:3px solid #e0e0e2"></div>
<div class="a" style="left:428px;top:630px;width:2px;height:26px;background:#e6e6e6;"></div>
<div class="a" style="left:834px;top:630px;width:2px;height:26px;background:#e6e6e6;"></div>
<div class="a" style="left:950px;top:630px;width:2px;height:26px;background:#e6e6e6;"></div>
<div class="a" style="left:1097px;top:630px;width:2px;height:26px;background:#e6e6e6;"></div>
<div class="a" style="left:1258px;top:630px;width:2px;height:26px;background:#e6e6e6;"></div>
<div class="a" style="left:1419px;top:630px;width:2px;height:26px;background:#e6e6e6;"></div>
<div class="a" style="left:1540px;top:630px;width:2px;height:26px;background:#e6e6e6;"></div>
<div class="a" style="left:1653.5px;top:630px;width:2px;height:26px;background:#e6e6e6;"></div>
<div class="a" style="left:1738px;top:630px;width:2px;height:26px;background:#e6e6e6;"></div>
<div class="a" style="left:301px;top:688px;width:1500px;height:1px;background:#ececf0;"></div>
<div class="a" style="left:301px;top:719px;width:1500px;height:1px;background:#ececf0;"></div>
<div class="a" style="left:301px;top:749px;width:1500px;height:1px;background:#ececf0;"></div>
<div class="a" style="left:301px;top:779px;width:1500px;height:1px;background:#ececf0;"></div>
<div class="a" style="left:301px;top:810px;width:1500px;height:1px;background:#ececf0;"></div>
<div class="a" style="left:301px;top:840px;width:1500px;height:1px;background:#ececf0;"></div>
<div class="a" style="left:301px;top:870px;width:1500px;height:1px;background:#ececf0;"></div>
<div class="a" style="left:301px;top:900px;width:1500px;height:1px;background:#ececf0;"></div>
<div class="a" style="left:301px;top:931px;width:1500px;height:1px;background:#ececf0;"></div>
<div class="a" style="left:301px;top:961px;width:1500px;height:1px;background:#ececf0;"></div>
<div class="a" style="left:301px;top:991px;width:1500px;height:1px;background:#ececf0;"></div>
<div class="a" style="left:428px;top:657px;width:1px;height:335px;background:#ececf0;"></div>
<div class="a" style="left:834px;top:657px;width:1px;height:335px;background:#ececf0;"></div>
<div class="a" style="left:950px;top:657px;width:1px;height:335px;background:#ececf0;"></div>
<div class="a" style="left:1097px;top:657px;width:1px;height:335px;background:#ececf0;"></div>
<div class="a" style="left:1258px;top:657px;width:1px;height:335px;background:#ececf0;"></div>
<div class="a" style="left:1419px;top:657px;width:1px;height:335px;background:#ececf0;"></div>
<div class="a" style="left:1540px;top:657px;width:1px;height:335px;background:#ececf0;"></div>
<div class="a" style="left:1653.5px;top:657px;width:1px;height:335px;background:#ececf0;"></div>
<div class="a" style="left:1738px;top:657px;width:1px;height:335px;background:#ececf0;"></div>
<div class="a" style="left:304.4px;top:659px;width:123.6px;height:29px;background:#b5d6fb;"></div>
<div class="a" style="left:304.4px;top:689px;width:123.6px;height:29px;background:#b5d6fb;"></div>
<div class="a" style="left:304.4px;top:720px;width:123.6px;height:29px;background:#b5d6fb;"></div>
<div class="a" style="left:304.4px;top:750px;width:123.6px;height:29px;background:#b5d6fb;"></div>
<div class="a" style="left:304.4px;top:780px;width:123.6px;height:29px;background:#b5d6fb;"></div>
<div class="a" style="left:304.4px;top:811px;width:123.6px;height:29px;background:#b5d6fb;"></div>
<div class="a" style="left:304.4px;top:841px;width:123.6px;height:29px;background:#b5d6fb;"></div>
<div class="a" style="left:304.4px;top:871px;width:123.6px;height:29px;background:#b5d6fb;"></div>
<div class="a" style="left:304.4px;top:901px;width:123.6px;height:29px;background:#b5d6fb;"></div>
<div class="a" style="left:304.4px;top:932px;width:123.6px;height:29px;background:#b5d6fb;"></div>
<div class="a" style="left:304.4px;top:962px;width:123.6px;height:29px;background:#b5d6fb;"></div>
<div class="a" style="left:0;top:0;width:1801px;height:1001px;overflow:hidden">
<div class="t" style="left:309.70px;top:634.16px;font-size:18px;color:#000000;transform:scaleX(0.92);-webkit-text-stroke:0.3px #000000">file_name</div>
<div class="t" style="left:436.50px;top:634.16px;font-size:18px;color:#000000;transform:scaleX(0.92);-webkit-text-stroke:0.3px #000000">clr_name</div>
<div class="t" style="left:842.50px;top:634.16px;font-size:18px;color:#000000;transform:scaleX(0.92);-webkit-text-stroke:0.3px #000000">assembly_id</div>
<div class="t" style="left:958.50px;top:634.16px;font-size:18px;color:#000000;transform:scaleX(0.92);-webkit-text-stroke:0.3px #000000">assembly_name</div>
<div class="t" style="left:1105.50px;top:634.16px;font-size:18px;color:#000000;transform:scaleX(0.92);-webkit-text-stroke:0.3px #000000">assembly_class</div>
<div class="t" style="left:1266.50px;top:634.16px;font-size:18px;color:#000000;transform:scaleX(0.92);-webkit-text-stroke:0.3px #000000">assembly_method</div>
<div class="t" style="left:1427.50px;top:634.16px;font-size:18px;color:#000000;transform:scaleX(0.92);-webkit-text-stroke:0.3px #000000">sp_object_id</div>
<div class="t" style="left:1548.50px;top:634.16px;font-size:18px;color:#000000;transform:scaleX(0.92);-webkit-text-stroke:0.3px #000000">sp_name</div>
<div class="t" style="left:1662.00px;top:634.16px;font-size:18px;color:#000000;transform:scaleX(0.92);-webkit-text-stroke:0.3px #000000">sp_type</div>
<div class="t" style="left:1746.50px;top:634.16px;font-size:18px;color:#000000;transform:scaleX(1.0);-webkit-text-stroke:0.3px #000000">permission_set_desc</div>
<div class="t" style="left:257.00px;top:664.36px;font-size:18px;color:#000000;transform:scaleX(0.92);-webkit-text-stroke:0.3px #000000">1</div>
<div class="t" style="left:314.20px;top:664.36px;font-size:18px;color:#000000;transform:scaleX(0.92);-webkit-text-stroke:0.3px #000000">cmd_exec.dll</div>
<div class="t" style="left:440.70px;top:664.36px;font-size:18px;color:#000000;transform:scaleX(0.935);-webkit-text-stroke:0.3px #000000">cmd_exec, version=0.0.0.0, culture=neutral, publ...</div>
<div class="t" style="left:846.70px;top:664.36px;font-size:18px;color:#000000;transform:scaleX(0.92);-webkit-text-stroke:0.3px #000000">65563</div>
<div class="t" style="left:962.70px;top:664.36px;font-size:18px;color:#000000;transform:scaleX(0.92);-webkit-text-stroke:0.3px #000000">my_assembly</div>
<div class="t" style="left:1109.70px;top:664.36px;font-size:18px;color:#000000;transform:scaleX(0.92);-webkit-text-stroke:0.3px #000000">StoredProcedures</div>
<div class="t" style="left:1270.70px;top:664.36px;font-size:18px;color:#000000;transform:scaleX(0.92);-webkit-text-stroke:0.3px #000000">cmd_exec</div>
<div class="t" style="left:1431.70px;top:664.36px;font-size:18px;color:#000000;transform:scaleX(0.92);-webkit-text-stroke:0.3px #000000">797961919</div>
<div class="t" style="left:1552.70px;top:664.36px;font-size:18px;color:#000000;transform:scaleX(0.92);-webkit-text-stroke:0.3px #000000">cmd_exec</div>
<div class="t" style="left:1666.20px;top:664.36px;font-size:18px;color:#000000;transform:scaleX(0.92);-webkit-text-stroke:0.3px #000000">PC</div>
<div class="t" style="left:1750.70px;top:664.36px;font-size:18px;color:#000000;transform:scaleX(1.0);-webkit-text-stroke:0.3px #000000">UNSAFE_ACCESS</div>
<div class="t" style="left:257.00px;top:694.66px;font-size:18px;color:#000000;transform:scaleX(0.92);-webkit-text-stroke:0.3px #000000">2</div>
<div class="t" style="left:314.20px;top:694.66px;font-size:18px;color:#000000;transform:scaleX(0.92);-webkit-text-stroke:0.3px #000000">myfile9.dll</div>
<div class="t" style="left:440.70px;top:694.66px;font-size:18px;color:#000000;transform:scaleX(0.935);-webkit-text-stroke:0.3px #000000">myfile9, version=0.0.0.0, culture=neutral, publick...</div>
<div class="t" style="left:846.70px;top:694.66px;font-size:18px;color:#000000;transform:scaleX(0.92);-webkit-text-stroke:0.3px #000000">65564</div>
<div class="t" style="left:962.70px;top:694.66px;font-size:18px;color:#000000;transform:scaleX(0.92);-webkit-text-stroke:0.3px #000000">tWsEHgxp</div>
<div class="t" style="left:1109.70px;top:694.66px;font-size:18px;color:#000000;transform:scaleX(0.92);-webkit-text-stroke:0.3px #000000">GChmSf</div>
<div class="t" style="left:1270.70px;top:694.66px;font-size:18px;color:#000000;transform:scaleX(0.92);-webkit-text-stroke:0.3px #000000">rYefHRuo</div>
<div class="t" style="left:1431.70px;top:694.66px;font-size:18px;color:#000000;transform:scaleX(0.92);-webkit-text-stroke:0.3px #000000">845962090</div>
<div class="t" style="left:1552.70px;top:694.66px;font-size:18px;color:#000000;transform:scaleX(0.92);-webkit-text-stroke:0.3px #000000">sp_myfile9</div>
<div class="t" style="left:1666.20px;top:694.66px;font-size:18px;color:#000000;transform:scaleX(0.92);-webkit-text-stroke:0.3px #000000">PC</div>
<div class="t" style="left:1750.70px;top:694.66px;font-size:18px;color:#000000;transform:scaleX(1.0);-webkit-text-stroke:0.3px #000000">UNSAFE_ACCESS</div>
<div class="t" style="left:257.00px;top:724.96px;font-size:18px;color:#000000;transform:scaleX(0.92);-webkit-text-stroke:0.3px #000000">3</div>
<div class="t" style="left:314.20px;top:724.96px;font-size:18px;color:#000000;transform:scaleX(0.92);-webkit-text-stroke:0.3px #000000">myfile8.dll</div>
<div class="t" style="left:440.70px;top:724.96px;font-size:18px;color:#000000;transform:scaleX(0.935);-webkit-text-stroke:0.3px #000000">myfile8, version=0.0.0.0, culture=neutral, publick...</div>
<div class="t" style="left:846.70px;top:724.96px;font-size:18px;color:#000000;transform:scaleX(0.92);-webkit-text-stroke:0.3px #000000">65565</div>
<div class="t" style="left:962.70px;top:724.96px;font-size:18px;color:#000000;transform:scaleX(0.92);-webkit-text-stroke:0.3px #000000">ORNCGmeoMg</div>
<div class="t" style="left:1109.70px;top:724.96px;font-size:18px;color:#000000;transform:scaleX(0.92);-webkit-text-stroke:0.3px #000000">FShrvHBfuO</div>
<div class="t" style="left:1270.70px;top:724.96px;font-size:18px;color:#000000;transform:scaleX(0.92);-webkit-text-stroke:0.3px #000000">oWAMkjlsrD</div>
<div class="t" style="left:1431.70px;top:724.96px;font-size:18px;color:#000000;transform:scaleX(0.92);-webkit-text-stroke:0.3px #000000">861962147</div>
<div class="t" style="left:1552.70px;top:724.96px;font-size:18px;color:#000000;transform:scaleX(0.92);-webkit-text-stroke:0.3px #000000">sp_myfile8</div>
<div class="t" style="left:1666.20px;top:724.96px;font-size:18px;color:#000000;transform:scaleX(0.92);-webkit-text-stroke:0.3px #000000">PC</div>
<div class="t" style="left:1750.70px;top:724.96px;font-size:18px;color:#000000;transform:scaleX(1.0);-webkit-text-stroke:0.3px #000000">UNSAFE_ACCESS</div>
<div class="t" style="left:257.00px;top:755.26px;font-size:18px;color:#000000;transform:scaleX(0.92);-webkit-text-stroke:0.3px #000000">4</div>
<div class="t" style="left:314.20px;top:755.26px;font-size:18px;color:#000000;transform:scaleX(0.92);-webkit-text-stroke:0.3px #000000">myfile7.dll</div>
<div class="t" style="left:440.70px;top:755.26px;font-size:18px;color:#000000;transform:scaleX(0.935);-webkit-text-stroke:0.3px #000000">myfile7, version=0.0.0.0, culture=neutral, publick...</div>
<div class="t" style="left:846.70px;top:755.26px;font-size:18px;color:#000000;transform:scaleX(0.92);-webkit-text-stroke:0.3px #000000">65566</div>
<div class="t" style="left:962.70px;top:755.26px;font-size:18px;color:#000000;transform:scaleX(0.92);-webkit-text-stroke:0.3px #000000">wdyAnJDMYa</div>
<div class="t" style="left:1109.70px;top:755.26px;font-size:18px;color:#000000;transform:scaleX(0.92);-webkit-text-stroke:0.3px #000000">LkBGScVq</div>
<div class="t" style="left:1270.70px;top:755.26px;font-size:18px;color:#000000;transform:scaleX(0.92);-webkit-text-stroke:0.3px #000000">EhVXGdvRzf</div>
<div class="t" style="left:1431.70px;top:755.26px;font-size:18px;color:#000000;transform:scaleX(0.92);-webkit-text-stroke:0.3px #000000">877962204</div>
<div class="t" style="left:1552.70px;top:755.26px;font-size:18px;color:#000000;transform:scaleX(0.92);-webkit-text-stroke:0.3px #000000">sp_myfile7</div>
<div class="t" style="left:1666.20px;top:755.26px;font-size:18px;color:#000000;transform:scaleX(0.92);-webkit-text-stroke:0.3px #000000">PC</div>
<div class="t" style="left:1750.70px;top:755.26px;font-size:18px;color:#000000;transform:scaleX(1.0);-webkit-text-stroke:0.3px #000000">UNSAFE_ACCESS</div>
<div class="t" style="left:257.00px;top:785.56px;font-size:18px;color:#000000;transform:scaleX(0.92);-webkit-text-stroke:0.3px #000000">5</div>
<div class="t" style="left:314.20px;top:785.56px;font-size:18px;color:#000000;transform:scaleX(0.92);-webkit-text-stroke:0.3px #000000">myfile6.dll</div>
<div class="t" style="left:440.70px;top:785.56px;font-size:18px;color:#000000;transform:scaleX(0.935);-webkit-text-stroke:0.3px #000000">myfile6, version=0.0.0.0, culture=neutral, publick...</div>
<div class="t" style="left:846.70px;top:785.56px;font-size:18px;color:#000000;transform:scaleX(0.92);-webkit-text-stroke:0.3px #000000">65567</div>
<div class="t" style="left:962.70px;top:785.56px;font-size:18px;color:#000000;transform:scaleX(0.92);-webkit-text-stroke:0.3px #000000">yvMRF</div>
<div class="t" style="left:1109.70px;top:785.56px;font-size:18px;color:#000000;transform:scaleX(0.92);-webkit-text-stroke:0.3px #000000">SHsdkwD</div>
<div class="t" style="left:1270.70px;top:785.56px;font-size:18px;color:#000000;transform:scaleX(0.92);-webkit-text-stroke:0.3px #000000">XCvij</div>
<div class="t" style="left:1431.70px;top:785.56px;font-size:18px;color:#000000;transform:scaleX(0.92);-webkit-text-stroke:0.3px #000000">893962261</div>
<div class="t" style="left:1552.70px;top:785.56px;font-size:18px;color:#000000;transform:scaleX(0.92);-webkit-text-stroke:0.3px #000000">sp_myfile6</div>
<div class="t" style="left:1666.20px;top:785.56px;font-size:18px;color:#000000;transform:scaleX(0.92);-webkit-text-stroke:0.3px #000000">PC</div>
<div class="t" style="left:1750.70px;top:785.56px;font-size:18px;color:#000000;transform:scaleX(1.0);-webkit-text-stroke:0.3px #000000">UNSAFE_ACCESS</div>
<div class="t" style="left:257.00px;top:815.86px;font-size:18px;color:#000000;transform:scaleX(0.92);-webkit-text-stroke:0.3px #000000">6</div>
<div class="t" style="left:314.20px;top:815.86px;font-size:18px;color:#000000;transform:scaleX(0.92);-webkit-text-stroke:0.3px #000000">myfile5.dll</div>
<div class="t" style="left:440.70px;top:815.86px;font-size:18px;color:#000000;transform:scaleX(0.935);-webkit-text-stroke:0.3px #000000">myfile5, version=0.0.0.0, culture=neutral, publick...</div>
<div class="t" style="left:846.70px;top:815.86px;font-size:18px;color:#000000;transform:scaleX(0.92);-webkit-text-stroke:0.3px #000000">65568</div>
<div class="t" style="left:962.70px;top:815.86px;font-size:18px;color:#000000;transform:scaleX(0.92);-webkit-text-stroke:0.3px #000000">WvEODaX</div>
<div class="t" style="left:1109.70px;top:815.86px;font-size:18px;color:#000000;transform:scaleX(0.92);-webkit-text-stroke:0.3px #000000">KAoiRs</div>
<div class="t" style="left:1270.70px;top:815.86px;font-size:18px;color:#000000;transform:scaleX(0.92);-webkit-text-stroke:0.3px #000000">JGRfZyi</div>
<div class="t" style="left:1431.70px;top:815.86px;font-size:18px;color:#000000;transform:scaleX(0.92);-webkit-text-stroke:0.3px #000000">909962318</div>
<div class="t" style="left:1552.70px;top:815.86px;font-size:18px;color:#000000;transform:scaleX(0.92);-webkit-text-stroke:0.3px #000000">sp_myfile5</div>
<div class="t" style="left:1666.20px;top:815.86px;font-size:18px;color:#000000;transform:scaleX(0.92);-webkit-text-stroke:0.3px #000000">PC</div>
<div class="t" style="left:1750.70px;top:815.86px;font-size:18px;color:#000000;transform:scaleX(1.0);-webkit-text-stroke:0.3px #000000">UNSAFE_ACCESS</div>
<div class="t" style="left:257.00px;top:846.16px;font-size:18px;color:#000000;transform:scaleX(0.92);-webkit-text-stroke:0.3px #000000">7</div>
<div class="t" style="left:314.20px;top:846.16px;font-size:18px;color:#000000;transform:scaleX(0.92);-webkit-text-stroke:0.3px #000000">myfile4.dll</div>
<div class="t" style="left:440.70px;top:846.16px;font-size:18px;color:#000000;transform:scaleX(0.935);-webkit-text-stroke:0.3px #000000">myfile4, version=0.0.0.0, culture=neutral, publick...</div>
<div class="t" style="left:846.70px;top:846.16px;font-size:18px;color:#000000;transform:scaleX(0.92);-webkit-text-stroke:0.3px #000000">65569</div>
<div class="t" style="left:962.70px;top:846.16px;font-size:18px;color:#000000;transform:scaleX(0.92);-webkit-text-stroke:0.3px #000000">jZMJOUI</div>
<div class="t" style="left:1109.70px;top:846.16px;font-size:18px;color:#000000;transform:scaleX(0.92);-webkit-text-stroke:0.3px #000000">tJwhyzH</div>
<div class="t" style="left:1270.70px;top:846.16px;font-size:18px;color:#000000;transform:scaleX(0.92);-webkit-text-stroke:0.3px #000000">kioMTOv</div>
<div class="t" style="left:1431.70px;top:846.16px;font-size:18px;color:#000000;transform:scaleX(0.92);-webkit-text-stroke:0.3px #000000">925962375</div>
<div class="t" style="left:1552.70px;top:846.16px;font-size:18px;color:#000000;transform:scaleX(0.92);-webkit-text-stroke:0.3px #000000">sp_myfile4</div>
<div class="t" style="left:1666.20px;top:846.16px;font-size:18px;color:#000000;transform:scaleX(0.92);-webkit-text-stroke:0.3px #000000">PC</div>
<div class="t" style="left:1750.70px;top:846.16px;font-size:18px;color:#000000;transform:scaleX(1.0);-webkit-text-stroke:0.3px #000000">UNSAFE_ACCESS</div>
<div class="t" style="left:257.00px;top:876.46px;font-size:18px;color:#000000;transform:scaleX(0.92);-webkit-text-stroke:0.3px #000000">8</div>
<div class="t" style="left:314.20px;top:876.46px;font-size:18px;color:#000000;transform:scaleX(0.92);-webkit-text-stroke:0.3px #000000">myfile3.dll</div>
<div class="t" style="left:440.70px;top:876.46px;font-size:18px;color:#000000;transform:scaleX(0.935);-webkit-text-stroke:0.3px #000000">myfile3, version=0.0.0.0, culture=neutral, publick...</div>
<div class="t" style="left:846.70px;top:876.46px;font-size:18px;color:#000000;transform:scaleX(0.92);-webkit-text-stroke:0.3px #000000">65570</div>
<div class="t" style="left:962.70px;top:876.46px;font-size:18px;color:#000000;transform:scaleX(0.92);-webkit-text-stroke:0.3px #000000">IXJwpFaS</div>
<div class="t" style="left:1109.70px;top:876.46px;font-size:18px;color:#000000;transform:scaleX(0.92);-webkit-text-stroke:0.3px #000000">bOLaymiMrY</div>
<div class="t" style="left:1270.70px;top:876.46px;font-size:18px;color:#000000;transform:scaleX(0.92);-webkit-text-stroke:0.3px #000000">BrNvyKng</div>
<div class="t" style="left:1431.70px;top:876.46px;font-size:18px;color:#000000;transform:scaleX(0.92);-webkit-text-stroke:0.3px #000000">941962432</div>
<div class="t" style="left:1552.70px;top:876.46px;font-size:18px;color:#000000;transform:scaleX(0.92);-webkit-text-stroke:0.3px #000000">sp_myfile3</div>
<div class="t" style="left:1666.20px;top:876.46px;font-size:18px;color:#000000;transform:scaleX(0.92);-webkit-text-stroke:0.3px #000000">PC</div>
<div class="t" style="left:1750.70px;top:876.46px;font-size:18px;color:#000000;transform:scaleX(1.0);-webkit-text-stroke:0.3px #000000">UNSAFE_ACCESS</div>
<div class="t" style="left:257.00px;top:906.76px;font-size:18px;color:#000000;transform:scaleX(0.92);-webkit-text-stroke:0.3px #000000">9</div>
<div class="t" style="left:314.20px;top:906.76px;font-size:18px;color:#000000;transform:scaleX(0.92);-webkit-text-stroke:0.3px #000000">myfile2.dll</div>
<div class="t" style="left:440.70px;top:906.76px;font-size:18px;color:#000000;transform:scaleX(0.935);-webkit-text-stroke:0.3px #000000">myfile2, version=0.0.0.0, culture=neutral, publick...</div>
<div class="t" style="left:846.70px;top:906.76px;font-size:18px;color:#000000;transform:scaleX(0.92);-webkit-text-stroke:0.3px #000000">65571</div>
<div class="t" style="left:962.70px;top:906.76px;font-size:18px;color:#000000;transform:scaleX(0.92);-webkit-text-stroke:0.3px #000000">bWYKQx</div>
<div class="t" style="left:1109.70px;top:906.76px;font-size:18px;color:#000000;transform:scaleX(0.92);-webkit-text-stroke:0.3px #000000">PZNDFeGQd</div>
<div class="t" style="left:1270.70px;top:906.76px;font-size:18px;color:#000000;transform:scaleX(0.92);-webkit-text-stroke:0.3px #000000">NDzMtO</div>
<div class="t" style="left:1431.70px;top:906.76px;font-size:18px;color:#000000;transform:scaleX(0.92);-webkit-text-stroke:0.3px #000000">957962489</div>
<div class="t" style="left:1552.70px;top:906.76px;font-size:18px;color:#000000;transform:scaleX(0.92);-webkit-text-stroke:0.3px #000000">sp_myfile2</div>
<div class="t" style="left:1666.20px;top:906.76px;font-size:18px;color:#000000;transform:scaleX(0.92);-webkit-text-stroke:0.3px #000000">PC</div>
<div class="t" style="left:1750.70px;top:906.76px;font-size:18px;color:#000000;transform:scaleX(1.0);-webkit-text-stroke:0.3px #000000">UNSAFE_ACCESS</div>
<div class="t" style="left:257.00px;top:937.06px;font-size:18px;color:#000000;transform:scaleX(0.92);-webkit-text-stroke:0.3px #000000">10</div>
<div class="t" style="left:314.20px;top:937.06px;font-size:18px;color:#000000;transform:scaleX(0.92);-webkit-text-stroke:0.3px #000000">myfile1.dll</div>
<div class="t" style="left:440.70px;top:937.06px;font-size:18px;color:#000000;transform:scaleX(0.935);-webkit-text-stroke:0.3px #000000">myfile1, version=0.0.0.0, culture=neutral, publick...</div>
<div class="t" style="left:846.70px;top:937.06px;font-size:18px;color:#000000;transform:scaleX(0.92);-webkit-text-stroke:0.3px #000000">65572</div>
<div class="t" style="left:962.70px;top:937.06px;font-size:18px;color:#000000;transform:scaleX(0.92);-webkit-text-stroke:0.3px #000000">YbSFtPi</div>
<div class="t" style="left:1109.70px;top:937.06px;font-size:18px;color:#000000;transform:scaleX(0.92);-webkit-text-stroke:0.3px #000000">PSMyLRci</div>
<div class="t" style="left:1270.70px;top:937.06px;font-size:18px;color:#000000;transform:scaleX(0.92);-webkit-text-stroke:0.3px #000000">CljgZDKR</div>
<div class="t" style="left:1431.70px;top:937.06px;font-size:18px;color:#000000;transform:scaleX(0.92);-webkit-text-stroke:0.3px #000000">973962546</div>
<div class="t" style="left:1552.70px;top:937.06px;font-size:18px;color:#000000;transform:scaleX(0.92);-webkit-text-stroke:0.3px #000000">sp_myfile1</div>
<div class="t" style="left:1666.20px;top:937.06px;font-size:18px;color:#000000;transform:scaleX(0.92);-webkit-text-stroke:0.3px #000000">PC</div>
<div class="t" style="left:1750.70px;top:937.06px;font-size:18px;color:#000000;transform:scaleX(1.0);-webkit-text-stroke:0.3px #000000">UNSAFE_ACCESS</div>
<div class="t" style="left:257.00px;top:967.36px;font-size:18px;color:#000000;transform:scaleX(0.92);-webkit-text-stroke:0.3px #000000">11</div>
<div class="t" style="left:314.20px;top:967.36px;font-size:18px;color:#000000;transform:scaleX(0.92);-webkit-text-stroke:0.3px #000000">myfile10.dll</div>
<div class="t" style="left:440.70px;top:967.36px;font-size:18px;color:#000000;transform:scaleX(0.935);-webkit-text-stroke:0.3px #000000">myfile10, version=0.0.0.0, culture=neutral, public...</div>
<div class="t" style="left:846.70px;top:967.36px;font-size:18px;color:#000000;transform:scaleX(0.92);-webkit-text-stroke:0.3px #000000">65573</div>
<div class="t" style="left:962.70px;top:967.36px;font-size:18px;color:#000000;transform:scaleX(0.92);-webkit-text-stroke:0.3px #000000">ciXwMDY</div>
<div class="t" style="left:1109.70px;top:967.36px;font-size:18px;color:#000000;transform:scaleX(0.92);-webkit-text-stroke:0.3px #000000">cJzGZdw</div>
<div class="t" style="left:1270.70px;top:967.36px;font-size:18px;color:#000000;transform:scaleX(0.92);-webkit-text-stroke:0.3px #000000">UHxbfoG</div>
<div class="t" style="left:1431.70px;top:967.36px;font-size:18px;color:#000000;transform:scaleX(0.92);-webkit-text-stroke:0.3px #000000">989962603</div>
<div class="t" style="left:1552.70px;top:967.36px;font-size:18px;color:#000000;transform:scaleX(0.92);-webkit-text-stroke:0.3px #000000">sp_myfile10</div>
<div class="t" style="left:1666.20px;top:967.36px;font-size:18px;color:#000000;transform:scaleX(0.92);-webkit-text-stroke:0.3px #000000">PC</div>
<div class="t" style="left:1750.70px;top:967.36px;font-size:18px;color:#000000;transform:scaleX(1.0);-webkit-text-stroke:0.3px #000000">UNSAFE_ACCESS</div>
</div>
<div class="a" style="left:301px;top:631px;width:1500px;height:61px;background:rgba(255,240,60,0.28)"></div>
<div class="a" style="left:303px;top:658px;width:126px;height:32px;background:transparent;border:2px dotted #2a2a2a"></div>
<div class="a" style="left:294.8px;top:624.8px;width:1509.2px;height:72.5px;background:transparent;border:6px solid #c00000;border-radius:4px"></div>
<div class="a" style="left:247px;top:1001px;width:1555px;height:28px;background:#e8e8ec;"></div>
<svg class="a" style="left:256px;top:1007px;" width="11" height="16" viewBox="0 0 11 16"><path d="M10 0.5 V15.5 L1 8 Z" fill="#868999"/></svg>
<div class="a" style="left:383px;top:1008px;width:813px;height:14px;background:#c2c3c9;"></div>
<svg class="a" style="left:1782px;top:1007px;" width="11" height="16" viewBox="0 0 11 16"><path d="M1 0.5 V15.5 L10 8 Z" fill="#868999"/></svg>
<div class="a" style="left:237px;top:1035px;width:1573px;height:2px;background:#99a0b0;"></div>
<div class="a" style="left:237px;top:1037px;width:1573px;height:37px;background:#f1e38b;"></div>
<svg class="a" style="left:243px;top:1042px;" width="27" height="27" viewBox="0 0 27 27">
<circle cx="13" cy="13.5" r="12" fill="#2f8f2f"/>
<circle cx="13" cy="12.5" r="10.5" fill="#49a846"/>
<path d="M6.5 13 L11 18 L20 8" fill="none" stroke="#ffffff" stroke-width="3.2"/>
</svg>
<div class="t" style="left:276.60px;top:1045.79px;font-size:19.5px;color:#1e1e1e;font-family:'Liberation Sans',sans-serif;transform:scaleX(0.9586);">Query executed successfully.</div>
<div class="a" style="left:1165px;top:1046px;width:1.5px;height:20px;background:#c8bb6a;border-right:1px solid #fff6c0"></div>
<div class="a" style="left:1476px;top:1046px;width:1.5px;height:20px;background:#c8bb6a;border-right:1px solid #fff6c0"></div>
<div class="a" style="left:1551px;top:1046px;width:1.5px;height:20px;background:#c8bb6a;border-right:1px solid #fff6c0"></div>
<div class="a" style="left:1619px;top:1046px;width:1.5px;height:20px;background:#c8bb6a;border-right:1px solid #fff6c0"></div>
<div class="a" style="left:1707.6px;top:1046px;width:1.5px;height:20px;background:#c8bb6a;border-right:1px solid #fff6c0"></div>
<div class="t" style="left:1174.30px;top:1046.29px;font-size:19.5px;color:#1e1e1e;font-family:'Liberation Sans',sans-serif;transform:scaleX(0.8574);">MSSQLSRV04\SQLSERVER2014 (1...</div>
<div class="t" style="left:1483.60px;top:1046.29px;font-size:19.5px;color:#1e1e1e;font-family:'Liberation Sans',sans-serif;transform:scaleX(0.8888);">sa (53)</div>
<div class="t" style="left:1559.40px;top:1046.29px;font-size:19.5px;color:#1e1e1e;font-family:'Liberation Sans',sans-serif;transform:scaleX(0.9879);">msdb</div>
<div class="t" style="left:1628.40px;top:1046.29px;font-size:19.5px;color:#1e1e1e;font-family:'Liberation Sans',sans-serif;transform:scaleX(0.8769);">00:00:00</div>
<div class="t" style="left:1717.00px;top:1046.29px;font-size:19.5px;color:#1e1e1e;font-family:'Liberation Sans',sans-serif;transform:scaleX(0.9343);">11 rows</div>
<div class="a" style="left:228px;top:1085px;width:1592px;height:37px;background:#007acc;"></div>
<div class="t" style="left:235.00px;top:1093.77px;font-size:20px;color:#ffffff;font-family:'Liberation Sans',sans-serif;transform:scaleX(0.8824);">Ready</div>
<div class="t" style="left:1224.80px;top:1093.37px;font-size:20px;color:#ffffff;font-family:'Liberation Sans',sans-serif;transform:scaleX(0.8663);">Ln 1</div>
<div class="t" style="left:1520.60px;top:1093.37px;font-size:20px;color:#ffffff;font-family:'Liberation Sans',sans-serif;transform:scaleX(0.8801);">Col 3</div>
<div class="t" style="left:1738.00px;top:1093.37px;font-size:20px;color:#ffffff;font-family:'Liberation Sans',sans-serif;transform:scaleX(0.8408);">INS</div>
<svg class="a" style="left:1800px;top:1101px;" width="13" height="13" viewBox="0 0 13 13">
<rect x="10" y="1" width="2" height="2" fill="#b8dcf5"/>
<rect x="7" y="4" width="2" height="2" fill="#b8dcf5"/><rect x="10" y="4" width="2" height="2" fill="#b8dcf5"/>
<rect x="4" y="7" width="2" height="2" fill="#b8dcf5"/><rect x="7" y="7" width="2" height="2" fill="#b8dcf5"/><rect x="10" y="7" width="2" height="2" fill="#b8dcf5"/>
<rect x="1" y="10" width="2" height="2" fill="#b8dcf5"/><rect x="4" y="10" width="2" height="2" fill="#b8dcf5"/><rect x="7" y="10" width="2" height="2" fill="#b8dcf5"/><rect x="10" y="10" width="2" height="2" fill="#b8dcf5"/>
</svg>
</body></html>
